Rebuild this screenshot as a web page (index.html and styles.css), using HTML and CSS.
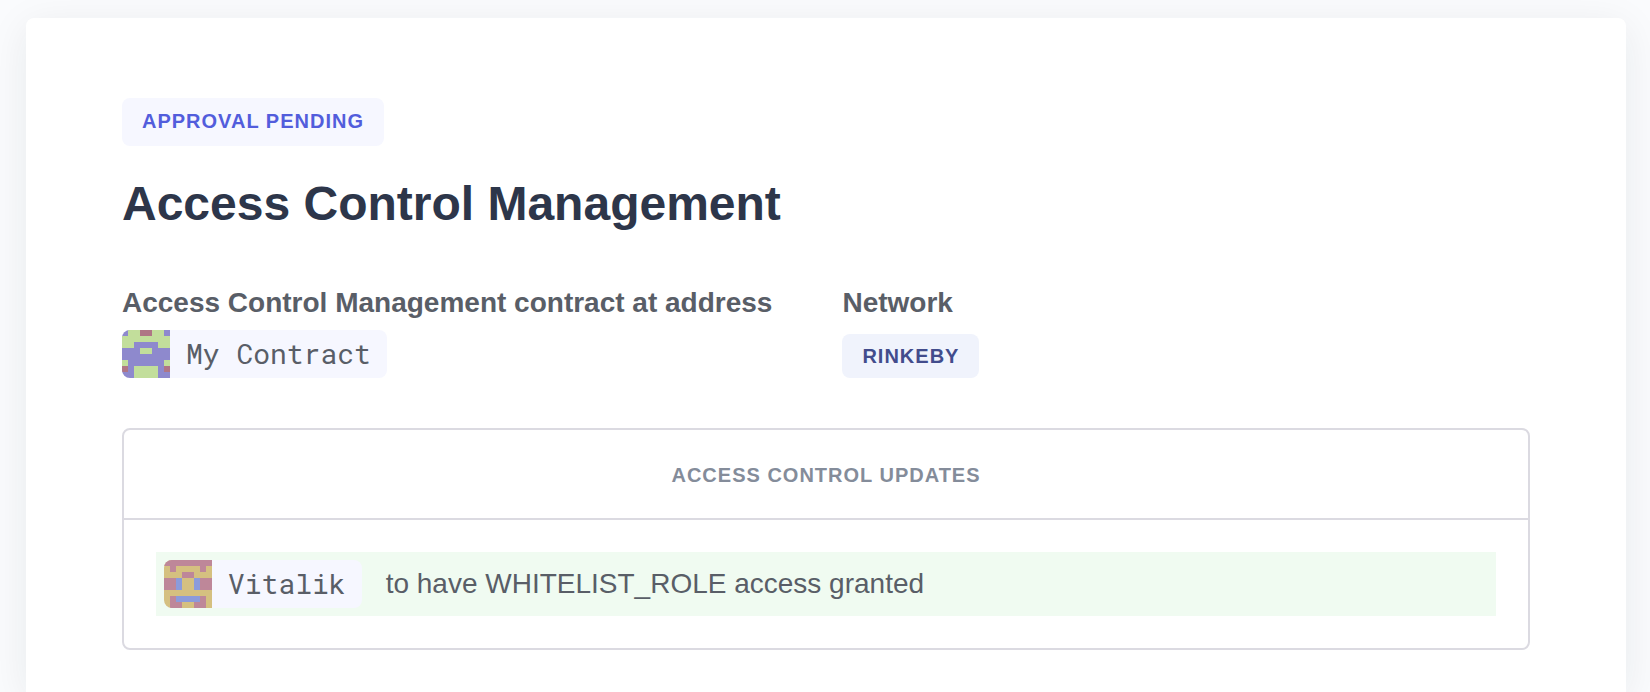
FILE: index.html
```html
<!DOCTYPE html>
<html lang="en">
<head>
<meta charset="utf-8">
<title>Access Control Management</title>
<meta name="viewport" content="width=device-width, initial-scale=1">
<link rel="stylesheet" href="styles.css">
</head>
<body>
<main class="card">
  <span class="badge badge-status">Approval pending</span>
  <h1 class="title">Access Control Management</h1>

  <dl class="details">
    <div class="detail">
      <dt class="detail-label">Access Control Management contract at address</dt>
      <dd class="detail-value">
        <span class="address">
          <svg class="identicon" viewBox="0 0 8 8" shape-rendering="crispEdges" aria-hidden="true">
            <path fill="#8e89cd" d="M0 0h8v8H0z"/>
            <path fill="#c2de9b" d="M1 0h6v1h1v2H6V2H2v1H0V1h1zM3 3h2v1H3zM0 5h1v1H0zM7 5h1v1H7zM2 6h4v2H2z"/>
            <path fill="#af7685" d="M3 0h2v1H3zM0 6h1v1H0zM7 6h1v1H7z"/>
          </svg>
          <span class="address-name">My Contract</span>
        </span>
      </dd>
    </div>
    <div class="detail">
      <dt class="detail-label">Network</dt>
      <dd class="detail-value"><span class="badge badge-network">Rinkeby</span></dd>
    </div>
  </dl>

  <section class="panel">
    <h2 class="panel-title">Access control updates</h2>
    <ul class="updates">
      <li class="update">
        <span class="address">
          <svg class="identicon" viewBox="0 0 8 8" shape-rendering="crispEdges" aria-hidden="true">
            <path fill="#d5c080" d="M0 0h8v8H0z"/>
            <path fill="#be8799" d="M0 0h8v1H7v1H6V1H2v1H1V1H0zM3 2h2v1H3zM0 3h2v2H0zM6 3h2v2H6zM1 6h1v1h1v1H1zM6 6h1v2H5V7h1z"/>
            <path fill="#8b9bdb" d="M2 3h1v2H2zM5 3h1v2H5zM2 6h4v1H2z"/>
          </svg>
          <span class="address-name">Vitalik</span>
        </span>
        <span class="update-text">to have WHITELIST_ROLE access granted</span>
      </li>
    </ul>
  </section>
</main>
</body>
</html>
```
FILE: styles.css
```css
* {
  box-sizing: border-box;
}

body {
  display: flex;
  flex-direction: column;
  min-height: 100vh;
  margin: 0;
  padding: 18px 24px 0 26px;
  background: #fafbfd;
  color: #595e67;
  font-family: "Helvetica Neue", "Liberation Sans", Arial, sans-serif;
  font-size: 28px;
  line-height: 40px;
}

.card {
  display: flex;
  flex: 1 0 auto;
  flex-direction: column;
  align-items: flex-start;
  padding: 80px 96px 40px;
  border-radius: 8px 8px 0 0;
  background: #fff;
  box-shadow: 0 8px 40px rgba(30, 40, 40, 0.08);
}

.badge {
  display: inline-block;
  padding: 0 20px;
  border-radius: 8px;
  font-size: 20px;
  font-weight: 700;
  letter-spacing: 1px;
  text-transform: uppercase;
}

.badge-status {
  padding-bottom: 2px;
  background: #f6f7ff;
  color: #525ddc;
  line-height: 46px;
}

.badge-network {
  background: #f0f3fc;
  color: #424c8c;
  line-height: 44px;
}

.title {
  margin: 24px 0 0;
  color: #2d364a;
  font-size: 48px;
  font-weight: 700;
  line-height: 68px;
}

.details {
  display: flex;
  gap: 70px;
  margin: 44px 0 0;
}

.detail {
  display: flex;
  flex-direction: column;
  justify-content: space-between;
}

.detail-label {
  font-weight: 700;
  line-height: 42px;
}

.detail-value {
  display: flex;
  margin: 6px 0 0;
}

.address {
  display: inline-flex;
  overflow: hidden;
  border-radius: 8px;
  background: #f6f7ff;
}

.identicon {
  display: block;
  width: 48px;
  height: 48px;
}

.address-name {
  padding: 0 16px;
  font-family: "Roboto Mono", "Liberation Mono", monospace;
  line-height: 48px;
}

.panel {
  align-self: stretch;
  margin-top: 50px;
  border: 2px solid #dbdae1;
  border-radius: 8px;
}

.panel-title {
  margin: 0;
  padding-top: 2px;
  border-bottom: 2px solid #dbdae1;
  color: #848c9a;
  font-size: 20px;
  font-weight: 700;
  letter-spacing: 1px;
  line-height: 86px;
  text-align: center;
  text-transform: uppercase;
}

.updates {
  margin: 0;
  padding: 32px;
  list-style: none;
}

.update {
  display: flex;
  align-items: center;
  gap: 24px;
  padding: 8px;
  background: #f0fbf1;
}
```
